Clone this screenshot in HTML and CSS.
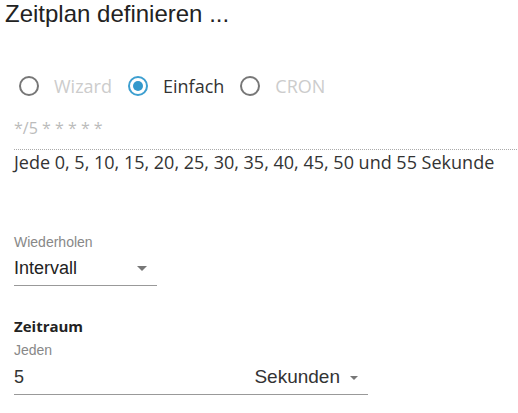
FILE: index.html
```html
<!DOCTYPE html>
<html lang="de">
<head>
    <meta charset="UTF-8">
    <meta name="viewport" content="width=device-width, initial-scale=1.0">
    <title>Zeitplan</title>
    <link rel="stylesheet" href="styles.css">
</head>
<body>
    <div class="schedule-container">
        <h2 class="title">Zeitplan definieren ...</h2>

        <div class="radio-group">
          <label class="radio disabled"><span class="circle"></span>Wizard</label>
          <label class="radio checked"><span class="circle"></span>Einfach</label>
          <label class="radio disabled"><span class="circle"></span>CRON</label>
        </div>

        <div class="cron-field">*/5 * * * * *</div>
        <div class="cron-text">Jede 0, 5, 10, 15, 20, 25, 30, 35, 40, 45, 50 und 55 Sekunde</div>

        <div class="field repeat-field">
          <label class="field-label">Wiederholen</label>
          <div class="select">
            <span>Intervall</span>
            <span class="arrow"></span>
          </div>
        </div>

        <div class="period">
          <h3>Zeitraum</h3>
          <label class="field-label">Jeden</label>
          <div class="period-row">
            <span class="value">5</span>
            <span class="unit">Sekunden<span class="arrow"></span></span>
          </div>
        </div>
    </div>
</body>
</html>
```

FILE: styles.css
```css
body {
  margin: 0;
  background: #fff;
  color: #222;
  font-family: "Liberation Sans", Arial, sans-serif;
}

.schedule-container {
  padding: 0 0 0 14px;
}

.title {
  margin: 0 0 0 -9px;
  font-size: 24px;
  font-weight: normal;
  line-height: 28px;
  color: #222;
}

.radio-group {
  display: flex;
  align-items: center;
  margin-top: 46px;
  height: 24px;
  font-family: "Open Sans", sans-serif;
  font-size: 18px;
}

.radio {
  display: flex;
  align-items: center;
  margin-right: 11px;
  color: #333;
}

.radio.disabled {
  color: #ccc;
}

.circle {
  width: 16px;
  height: 16px;
  border: 2px solid #777;
  border-radius: 50%;
  margin: 0 15px 0 5px;
  position: relative;
}

.radio.checked .circle {
  border-color: #3d9fd0;
}

.radio.checked .circle::after {
  content: "";
  position: absolute;
  left: 3px;
  top: 3px;
  width: 10px;
  height: 10px;
  border-radius: 50%;
  background: #3399cc;
}

.cron-field {
  margin-top: 20px;
  margin-right: 1px;
  padding-bottom: 11px;
  border-bottom: 1px dotted #aaa;
  font-family: "Open Sans", sans-serif;
  font-size: 16px;
  color: #bbb;
  line-height: 20px;
}

.cron-text {
  font-family: "Open Sans", sans-serif;
  font-size: 18px;
  line-height: 24px;
  color: #333;
}

.field-label {
  display: block;
  font-size: 14px;
  color: #888;
  line-height: 16px;
}

.repeat-field {
  margin-top: 60px;
  width: 143px;
}

.select {
  display: flex;
  justify-content: space-between;
  align-items: center;
  height: 33px;
  margin-top: 2px;
  border-bottom: 1px solid #999;
  font-size: 18px;
  color: #222;
}

.arrow {
  display: inline-block;
  width: 0;
  height: 0;
  border-left: 5px solid transparent;
  border-right: 5px solid transparent;
  border-top: 5px solid #777;
  margin-right: 10px;
}

.period {
  margin-top: 30px;
  width: 354px;
}

.period h3 {
  margin: 0 0 6px 0;
  font-family: "Open Sans", sans-serif;
  font-size: 15px;
  font-weight: bold;
  line-height: 20px;
  color: #222;
}

.period-row {
  display: flex;
  justify-content: space-between;
  align-items: center;
  height: 34px;
  margin-top: 2px;
  border-bottom: 1px solid #999;
  font-size: 18px;
  color: #333;
}

.unit {
  font-size: 19px;
}

.unit .arrow {
  border-left-width: 4px;
  border-right-width: 4px;
  border-top-width: 4px;
  margin: 0 10px 0 10px;
  vertical-align: middle;
}
```
